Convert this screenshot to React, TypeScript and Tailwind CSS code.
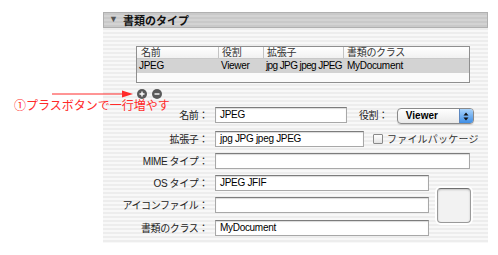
import React from "react";

const stripes =
  "bg-[repeating-linear-gradient(180deg,#ededed_0px,#ededed_2px,#f8f8f8_2px,#f8f8f8_4px)]";

const font = "font-['Liberation_Sans','Noto_Sans_CJK_JP',sans-serif]";

const Field = ({ value, className }: { value?: string; className: string }) => (
  <div
    className={`h-[16px] bg-white border border-[#a8a8a8] border-t-[#7c7c7c] shadow-[inset_0_1px_1px_rgba(0,0,0,0.15)] pl-[4px] text-[10px] leading-[14px] text-black tracking-[-0.3px] ${className}`}
  >
    {value}
  </div>
);

const Label = ({ text }: { text: string }) => (
  <div className="w-[106px] shrink-0 text-right text-[10px] text-[#222] pr-[1px] tracking-[-0.4px]">
    {text}
  </div>
);

const App = () => {
  return (
    <div className={`relative w-[498px] h-[255px] bg-white ${font}`}>
      {/* annotation */}
      <div className="absolute left-[14px] top-[98px] text-[12px] leading-[14px] text-[#ff2a2a] font-['Noto_Sans_CJK_JP',sans-serif] z-10">
        ①プラスボタンで一行増やす
      </div>
      <svg className="absolute left-[52px] top-[90px] z-10" width="82" height="8" viewBox="0 0 82 8">
        <line x1="0" y1="4" x2="74" y2="4" stroke="#ff2a2a" strokeWidth="1" />
        <path d="M70 0.5 L81 4 L70 7.5 Z" fill="#ff2a2a" />
      </svg>

      <div className="pt-[12px] pl-[103px]">
        <div className={`w-[385px] h-[231px] ${stripes} flex flex-col`}>
          {/* header */}
          <div className="h-[16px] flex items-center gap-[5px] pl-[5px] bg-[repeating-linear-gradient(180deg,#c9c9c9_0px,#c9c9c9_2px,#d3d3d3_2px,#d3d3d3_4px)] border border-[#b0b0b0]">
            <span className="text-[9px] text-[#555]">▼</span>
            <span className="text-[11px] font-bold text-[#111] font-['Noto_Sans_CJK_JP',sans-serif]">書類のタイプ</span>
          </div>

          {/* table */}
          <div className="ml-[33px] mt-[18px] w-[334px] border border-[#8f8f8f] bg-white text-[10px] tracking-[-0.3px]">
            <div className="flex h-[12px] leading-[12px] text-[#333] bg-[linear-gradient(#ffffff,#f1f1f1)] border-b border-[#c8c8c8]">
              <div className="w-[82px] pl-[4px] border-r border-[#c4c4c4]">名前</div>
              <div className="w-[45px] pl-[3px] border-r border-[#c4c4c4]">役割</div>
              <div className="w-[80px] pl-[3px] border-r border-[#c4c4c4]">拡張子</div>
              <div className="flex-1 pl-[3px]">書類のクラス</div>
            </div>
            <div className="flex h-[14px] leading-[14px] bg-[#d3d3d3] text-black">
              <div className="w-[82px] pl-[2px]">JPEG</div>
              <div className="w-[45px] pl-[2px]">Viewer</div>
              <div className="w-[80px] pl-[2px] whitespace-nowrap tracking-[-0.6px]">jpg JPG jpeg JPEG</div>
              <div className="flex-1 pl-[3px]">MyDocument</div>
            </div>
            <div className="h-[9px] bg-[#fbfbfb]" />
          </div>

          {/* plus / minus */}
          <div className="ml-[34px] mt-[6px] flex gap-[5px]">
            <div className="w-[10px] h-[10px] rounded-full bg-[#5a5a5a] flex items-center justify-center">
              <svg width="6" height="6" viewBox="0 0 6 6">
                <path d="M3 0.5 V5.5 M0.5 3 H5.5" stroke="#fff" strokeWidth="1.4" />
              </svg>
            </div>
            <div className="w-[10px] h-[10px] rounded-full bg-[#5a5a5a] flex items-center justify-center">
              <svg width="6" height="6" viewBox="0 0 6 6">
                <path d="M0.5 3 H5.5" stroke="#fff" strokeWidth="1.4" />
              </svg>
            </div>
          </div>

          {/* form */}
          <div className="mt-[8px] flex flex-col">
            <div className="flex items-center gap-[6px] h-[16px]">
              <Label text="名前：" />
              <Field value="JPEG" className="w-[132px]" />
              <div className="ml-[6px] text-[10px] text-[#222] tracking-[-0.4px]">役割：</div>
              <div className="ml-[3px] mt-[2px] h-[16px] w-[77px] flex rounded-[4px] border border-[#8a8a8a] bg-[linear-gradient(#ffffff,#e9e9e9)] shadow-[0_1px_1px_rgba(0,0,0,0.15)] overflow-hidden">
                <div className="flex-1 pl-[8px] text-[10px] leading-[14px] font-bold text-black">Viewer</div>
                <div className="w-[14px] bg-[linear-gradient(#a9d3fb,#3f8ee6)] border-l border-[#5d88c0] flex items-center justify-center">
                  <svg width="6" height="9" viewBox="0 0 6 9">
                    <path d="M0.5 3.5 L3 0.5 L5.5 3.5 Z M0.5 5.5 L3 8.5 L5.5 5.5 Z" fill="#111" />
                  </svg>
                </div>
              </div>
            </div>

            <div className="flex items-center gap-[6px] h-[16px] mt-[8px]">
              <Label text="拡張子：" />
              <Field value="jpg JPG jpeg JPEG" className="w-[149px]" />
              <div className="ml-[3px] w-[10px] h-[10px] border border-[#8a8a8a] bg-[linear-gradient(#ffffff,#e4e4e4)] rounded-[1px]" />
              <div className="text-[10px] text-[#333] -ml-[2px] tracking-[0.2px]">ファイルパッケージ</div>
            </div>

            <div className="flex items-center gap-[6px] h-[16px] mt-[6px]">
              <Label text="MIME タイプ：" />
              <Field className="w-[255px]" />
            </div>

            <div className="flex mt-[6px]">
              <div className="flex flex-col gap-[6px]">
                <div className="flex items-center gap-[6px] h-[16px]">
                  <Label text="OS タイプ：" />
                  <Field value="JPEG JFIF" className="w-[214px]" />
                </div>
                <div className="flex items-center gap-[6px] h-[16px]">
                  <Label text="アイコンファイル：" />
                  <Field className="w-[214px]" />
                </div>
                <div className="flex items-center gap-[6px] h-[16px] mt-[1px]">
                  <Label text="書類のクラス：" />
                  <Field value="MyDocument" className="w-[214px]" />
                </div>
              </div>
              <div className="ml-[8px] mt-[13px] w-[34px] h-[35px] rounded-[4px] border border-[#9a9a9a] border-t-[#6f6f6f] bg-[#f2f2f2] shadow-[0_0_0_2px_#ffffff,inset_0_1px_2px_rgba(0,0,0,0.2)]" />
            </div>
          </div>
        </div>
      </div>
    </div>
  );
};

export default App;
